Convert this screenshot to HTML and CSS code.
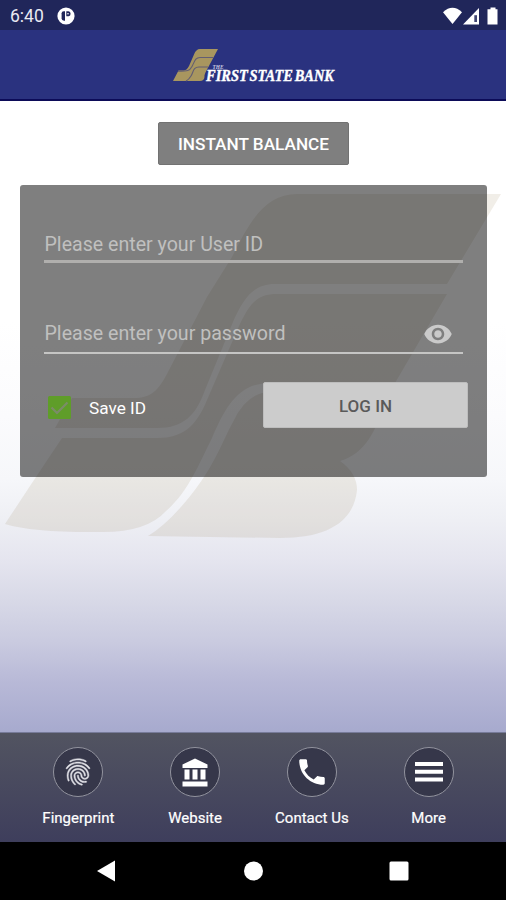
FILE: index.html
```html
<!DOCTYPE html>
<html lang="en">
<head>
<meta charset="utf-8">
<title>The First State Bank</title>
<link rel="stylesheet" href="styles.css">
</head>
<body>
<div class="status">
  <span class="time">6:40</span>
  <svg class="app-dot" viewBox="0 0 18 18"><circle cx="9" cy="9" r="8.6" fill="#fff"/><path d="M4.600 6.200Q4.600 4.300 6.800 4.300H8V13.800H7Q4.600 13.400 4.600 11.500Z" fill="#20265a"/><path d="M9.300 4.300H11.500Q13.600 4.300 13.600 6.800T11.500 9.200H9.300Z" fill="#20265a"/><circle cx="11" cy="6.700" r=".8" fill="#fff"/></svg>
  <svg class="signals" viewBox="0 0 56 18"><path d="M0 5.200Q9.500-3.500 19 5.200L9.500 17Z" fill="#fff"/><path d="M36 1V17.500H20Z" fill="#fff"/><path d="M31.300 8.200H34V15H31.300Z" fill="#20265a" opacity=".85"/><path d="M47.500.5H52.500V2.200H54.500V17.500H44.500V2.200H47.500Z" fill="#fff"/></svg>
</div>
<header class="brand">
  <svg class="logo" viewBox="0 0 165 36">
    <path fill="#a8965f" d="M28 1H46L34.500 22.500Q32 27 32.500 29Q32 33 28 33H1L6.500 22.500H12Q15 22 17 18L22 6.500Q24 1 28 1Z"/>
    <path fill="none" stroke="#625d73" stroke-width="1.100" d="M41 9.500H28C23 9.500 22.500 14 20 18.500S16 23.300 6 23.300M36 19H27C21 19 21.500 24 19 28S16 32 14 33"/>
    <text class="logo-the" x="40.500" y="20.500" textLength="11" lengthAdjust="spacingAndGlyphs">THE</text>
    <text class="logo-name" x="34" y="32.500" textLength="128" lengthAdjust="spacingAndGlyphs">FIRST STATE BANK</text>
  </svg>
</header>
<main class="content">
  <svg class="watermark" viewBox="0 0 506 631">
    <g transform="translate(0 -101)">
      <path d="M297 194H501L447 284H275C252 284 243 300 233 322L205 390C196 415 184 428 157 428H55L72 398H137C153 397 160 388 169 370L207 297L232 257C250 220 266 194 297 194Z"/>
      <path d="M447 294L395 383H270C238 383 225 408 212 438C198 466 188 492 166 511Q147 532 103 532Q35 533 5 524L32 483L62 438H158C182 438 196 427 207 400L239 326C250 302 258 294 277 294Z"/>
      <path d="M262 393H390L385 400C377 430 365 454 340 461Q357 473 357 490C354 520 330 538 280 538L148 536Q168 524 191 495C215 465 223 440 233 422Q244 398 262 393Z"/>
    </g>
  </svg>
  <button class="instant">INSTANT BALANCE</button>
  <form class="panel">
    <div class="field"><span>Please enter your User ID</span></div>
    <div class="field password"><span>Please enter your password</span>
      <svg class="eye" viewBox="0 0 24 24"><path d="M12 4.500C7 4.500 2.730 7.610 1 12c1.730 4.390 6 7.500 11 7.500s9.270-3.110 11-7.500c-1.730-4.390-6-7.500-11-7.500zM12 17c-2.760 0-5-2.240-5-5s2.240-5 5-5 5 2.240 5 5-2.240 5-5 5zm0-8c-1.660 0-3 1.340-3 3s1.340 3 3 3 3-1.340 3-3-1.340-3-3-3z"/></svg>
    </div>
    <div class="actions">
      <svg class="check" viewBox="0 0 23 23"><rect width="23" height="23" rx="1.500" fill="#5f9d29"/><path d="M3.500 11.500L9 17L19.500 6.500" fill="none" stroke="#7b8c68" stroke-width="2.200"/></svg>
      <span class="save">Save ID</span>
      <button class="login" type="button">LOG IN</button>
    </div>
  </form>
</main>
<nav class="tabs">
  <a class="tab"><span class="ring"><svg class="finger" viewBox="0 0 24 24"><path d="M17.810 4.470c-.08 0-.16-.02-.23-.06C15.660 3.420 14 3 12.010 3c-1.980 0-3.860.47-5.570 1.410-.24.13-.54.04-.68-.2-.13-.24-.04-.55.2-.68C7.820 2.520 9.860 2 12.010 2c2.130 0 3.990.47 6.030 1.520.25.13.34.43.21.67-.09.18-.26.28-.44.28zM3.500 9.720c-.1 0-.2-.03-.29-.09-.23-.16-.28-.47-.12-.7.99-1.400 2.250-2.500 3.750-3.270C9.980 4.040 14 4.030 17.150 5.650c1.500.77 2.760 1.860 3.750 3.250.16.22.11.54-.12.7-.23.16-.54.11-.7-.12-.9-1.260-2.040-2.250-3.390-2.940-2.870-1.470-6.540-1.470-9.400.01-1.360.7-2.500 1.700-3.400 2.960-.08.14-.23.21-.39.21zm6.250 12.070c-.13 0-.26-.05-.35-.15-.87-.87-1.340-1.430-2.010-2.640-.69-1.230-1.050-2.730-1.050-4.340 0-2.970 2.540-5.390 5.660-5.390s5.660 2.420 5.660 5.390c0 .28-.22.5-.5.5s-.5-.22-.5-.5c0-2.420-2.090-4.390-4.660-4.390-2.570 0-4.660 1.970-4.660 4.390 0 1.440.32 2.770.93 3.850.64 1.150 1.080 1.640 1.850 2.420.19.2.19.51 0 .71-.11.1-.24.15-.37.15zm7.170-1.850c-1.190 0-2.240-.3-3.100-.89-1.490-1.010-2.380-2.650-2.380-4.390 0-.28.22-.5.5-.5s.5.22.5.5c0 1.410.72 2.740 1.940 3.560.71.48 1.540.71 2.540.71.24 0 .64-.03 1.040-.1.27-.05.53.13.58.41.05.27-.13.53-.41.58-.57.11-1.070.12-1.210.12zM14.910 22c-.04 0-.09-.01-.13-.02-1.590-.44-2.630-1.030-3.720-2.100-1.400-1.390-2.170-3.240-2.170-5.220 0-1.620 1.380-2.940 3.080-2.940 1.700 0 3.080 1.320 3.080 2.940 0 1.070.93 1.940 2.080 1.940s2.080-.87 2.080-1.940c0-3.770-3.250-6.830-7.250-6.830-2.840 0-5.440 1.580-6.610 4.030-.39.81-.59 1.760-.59 2.800 0 .78.07 2.010.67 3.610.1.26-.03.55-.29.64-.26.1-.55-.04-.64-.29-.49-1.310-.73-2.610-.73-3.960 0-1.200.23-2.290.68-3.240 1.330-2.790 4.280-4.600 7.510-4.600 4.550 0 8.250 3.510 8.250 7.830 0 1.620-1.380 2.940-3.080 2.940s-3.080-1.320-3.080-2.940c0-1.070-.93-1.940-2.080-1.940s-2.080.87-2.080 1.940c0 1.710.66 3.310 1.870 4.510.95.94 1.860 1.460 3.270 1.850.27.07.42.35.35.61-.05.23-.26.38-.47.38z"/></svg></span>Fingerprint</a>
  <a class="tab"><span class="ring"><svg class="bank" viewBox="0 0 26 29"><path d="M13 .5L25.500 6.500V10H.5V6.500ZM2.500 11.500H7.500V21.500H2.500ZM10.500 11.500H15.500V21.500H10.500ZM18.500 11.500H23.500V21.500H18.500ZM.5 23.500H25.500V28.500H.5Z"/></svg></span>Website</a>
  <a class="tab"><span class="ring"><svg class="phone" viewBox="0 0 24 24"><path d="M6.620 10.790c1.440 2.830 3.760 5.140 6.590 6.590l2.200-2.200c.27-.27.67-.36 1.020-.24 1.120.37 2.330.57 3.570.57.55 0 1 .45 1 1V20c0 .55-.45 1-1 1-9.390 0-17-7.610-17-17 0-.55.45-1 1-1h3.500c.55 0 1 .45 1 1 0 1.250.2 2.450.57 3.570.11.35.03.74-.25 1.020l-2.200 2.200z"/></svg></span>Contact Us</a>
  <a class="tab"><span class="ring"><svg class="menu" viewBox="0 0 30 24"><path d="M1 2h28v4H1zM1 9.800h28v4H1zM1 17.600h28v4H1z"/></svg></span>More</a>
</nav>
<div class="sysnav">
  <svg viewBox="0 0 20 22"><path d="M0 11L18 .5V21.500Z"/></svg>
  <svg viewBox="0 0 20 22"><circle cx="10.500" cy="11" r="9.500"/></svg>
  <svg viewBox="0 0 20 22"><rect x=".5" y="1.500" width="19" height="19" rx="1.500"/></svg>
</div>
</body>
</html>
```
FILE: styles.css
```css
* { box-sizing: border-box; }
body {
  margin: 0;
  width: 506px;
  height: 900px;
  overflow: hidden;
  display: flex;
  flex-direction: column;
  font-family: Roboto, "Liberation Sans", sans-serif;
  background: #000;
}
svg { display: block; fill: #fff; }
button { border: 0; padding: 0; font-family: inherit; }

.status {
  height: 30px;
  flex: none;
  display: flex;
  align-items: center;
  padding: 1px 7px 0 10px;
  background: #20265a;
}
.time { color: #e9eaf2; font-size: 17.5px; width: 47px; }
.app-dot { width: 18px; height: 18px; }
.signals { width: 56px; height: 18px; margin-left: auto; }

.brand {
  height: 71px;
  flex: none;
  padding: 18px 0 0 172px;
  background: #2a327f;
  border-bottom: 2px solid #0c0b58;
}
.logo { width: 165px; height: 36px; overflow: visible; }
.logo-name { font: italic bold 16px "Liberation Serif", serif; word-spacing: -2px; fill: #fff; stroke: #fff; stroke-width: .4px; }
.logo-the { font: italic bold 6px "Liberation Serif", serif; fill: #c9cbe0; }

.content {
  position: relative;
  height: 631px;
  flex: none;
  padding: 21px 19px 0 20px;
  display: flex;
  flex-direction: column;
  align-items: center;
  background: linear-gradient(#fff 0, #fff 35%, #fbfbfd 50%, #f6f7fa 60%, #eeeff4 66.5%, #e5e5ef 72.7%, #d8d9e7 79%, #cacbe0 85.5%, #b8b9d7 92%, #a7aace 100%);
}
.watermark { position: absolute; left: 0; top: 0; width: 506px; height: 631px; fill: rgba(140, 120, 75, .125); }
.instant {
  position: relative;
  width: 191px;
  height: 43px;
  border: 1px solid #727272;
  border-radius: 2px;
  background: #7f7f7f;
  color: #fff;
  font-size: 17.2px;
  font-weight: 500;
}
.panel {
  position: relative;
  width: 467px;
  height: 292px;
  margin-top: 20px;
  padding: 35px 20px 0 24px;
  border-radius: 3px;
  background: rgba(0, 0, 0, .5);
}
.field {
  width: 419px;
  height: 43px;
  display: flex;
  align-items: center;
  justify-content: space-between;
  padding: 9px 10px 0 .5px;
  border-bottom: 3px solid #b0afad;
  color: #c0c0bf;
  font-size: 19.6px;
}
.password { height: 47px; margin-top: 44px; padding-top: 8px; border-bottom: 2px solid #c5c5c4; }
.eye { width: 30px; height: 30px; fill: #cacaca; }
.actions { display: flex; align-items: center; width: 424px; margin-top: 28px; padding-left: 4px; }
.check { width: 23px; height: 23px; margin-top: 5px; }
.save { color: #fff; font-size: 17.2px; margin: 5px 0 0 18px; }
.login {
  width: 205px;
  height: 46px;
  margin-left: auto;
  padding-top: 2px;
  border: 1px solid #bdbdbd;
  border-radius: 2px;
  background: #ccc;
  color: #5a5a5a;
  font-size: 17px;
  font-weight: 500;
}

.tabs {
  height: 110px;
  flex: none;
  display: flex;
  padding: 14px 19px 0 20px;
  border-top: 1px solid #777b99;
  background: linear-gradient(#525461, #3e3e5c);
}
.tab {
  flex: 1;
  display: flex;
  flex-direction: column;
  align-items: center;
  gap: 12px;
  color: #fff;
  font-size: 15px;
  line-height: 18px;
  -webkit-text-stroke: .2px #fff;
}
.ring {
  width: 50px;
  height: 50px;
  display: flex;
  align-items: center;
  justify-content: center;
  border: 1.5px solid #92939e;
  border-radius: 50%;
  background: #36374a;
}
.finger { width: 32px; height: 32px; stroke: #d8d8df; stroke-width: .35px; fill: #e2e2e8; }
.bank { width: 26px; height: 29px; }
.phone { width: 34px; height: 34px; }
.menu { width: 30px; height: 24px; }

.sysnav {
  height: 58px;
  flex: none;
  display: flex;
  justify-content: center;
  gap: 126px;
  padding-top: 18px;
  background: #000;
}
.sysnav svg { width: 20px; height: 22px; }
```
